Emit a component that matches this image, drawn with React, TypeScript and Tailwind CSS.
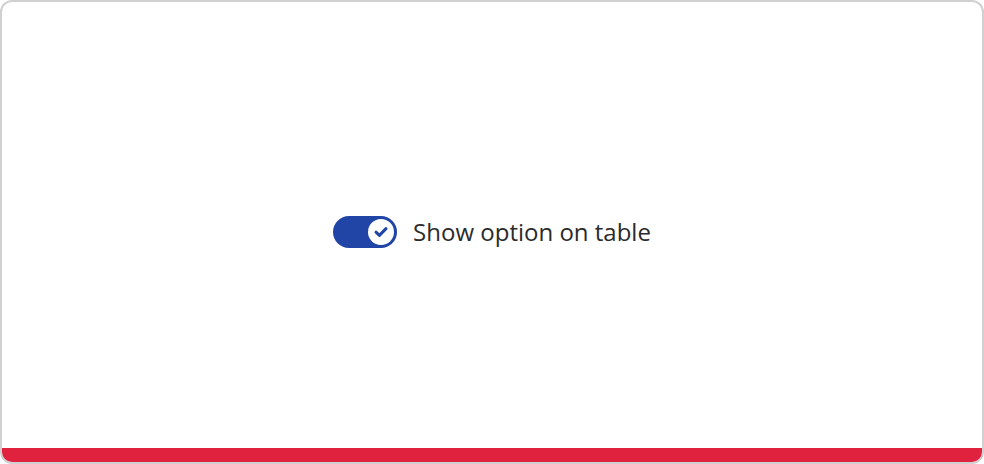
import { useState } from 'react';

function Toggle({ on, onChange }: { on: boolean; onChange: (v: boolean) => void }) {
    return (
        <button
            type="button"
            role="switch"
            aria-checked={on}
            onClick={() => onChange(!on)}
            className={`flex items-center w-[64px] h-[32px] rounded-full px-[3px] shrink-0 ${on ? 'bg-[#2145a6] justify-end' : 'bg-[#c4c4c4] justify-start'}`}
        >
            <span className="flex items-center justify-center w-[26px] h-[26px] rounded-full bg-white">
                {on && (
                    <svg width="16" height="16" viewBox="0 0 16 16" fill="none">
                        <path d="M3 8.2 L6.4 11.4 L13 4.6" stroke="#2145a6" strokeWidth="3" strokeLinecap="round" strokeLinejoin="round" />
                    </svg>
                )}
            </span>
        </button>
    );
}

export default function App() {
    const [on, setOn] = useState(true);

    return (
        <div className="w-[984px] h-[464px] bg-white">
            <div className="w-full h-full flex flex-col rounded-[12px] border-2 border-[#d0d0d0] overflow-hidden">
                <div className="flex-1 flex items-center justify-center gap-4 pt-[14px]">
                    <Toggle on={on} onChange={setOn} />
                    <span className="text-[24px] text-[#2b2b2b] font-['Open_Sans',sans-serif]">Show option on table</span>
                </div>
                <div className="h-[14px] bg-[#e0223f]" />
            </div>
        </div>
    );
}
